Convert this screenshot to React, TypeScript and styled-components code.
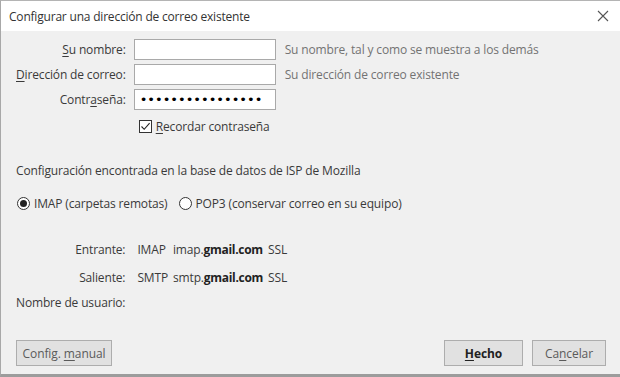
import React from "react";
import styled, { createGlobalStyle } from "styled-components";

const Global = createGlobalStyle`
  html, body { margin: 0; padding: 0; background: #f0f0f0; }
  body { font-family: "Open Sans", "Noto Sans", sans-serif; font-size: 12px; letter-spacing: -0.15px; color: #3a3a3a; }
  * { box-sizing: border-box; }
`;

const Window = styled.div`
  width: 620px;
  height: 377px;
  display: flex;
  flex-direction: column;
  border-top: 1px solid #b4b4b4;
  border-left: 1px solid #a8a8a8;
  border-bottom: 3px solid #9c9c9c;
  background: #f0f0f0;
  overflow: hidden;
`;

const TitleBar = styled.div`
  height: 30px;
  flex: none;
  background: #ffffff;
  display: flex;
  align-items: center;
  justify-content: space-between;
  padding: 0 8px 0 8px;
`;

const Title = styled.div`
  font-size: 12px;
  letter-spacing: -0.2px;
  color: #333;
`;

const Close = styled.div`
  width: 14px;
  height: 14px;
  margin-right: 2px;
  display: flex;
  align-items: center;
  justify-content: center;
`;

const Body = styled.div`
  flex: 1;
  display: flex;
  flex-direction: column;
  padding: 8px 14px 8px 15px;
`;

const FormGrid = styled.div`
  display: grid;
  grid-template-columns: auto 142px auto;
  justify-content: start;
  column-gap: 8px;
  row-gap: 4px;
  align-items: center;
`;

const Label = styled.label`
  text-align: right;
  color: #3a3a3a;
  white-space: nowrap;
  u { text-decoration: underline; text-underline-offset: 2px; }
`;

const Input = styled.div`
  height: 21px;
  background: #fff;
  border: 1px solid #a9a9a9;
  display: flex;
  align-items: center;
  padding-left: 5px;
  font-size: 13px;
  letter-spacing: 0;
  color: #000;
  font-family: "DejaVu Sans", sans-serif;
`;

const Hint = styled.span`
  color: #737373;
  padding-left: 1px;
  white-space: nowrap;
`;

const CheckRow = styled.div`
  grid-column: 2 / 4;
  display: flex;
  align-items: center;
  gap: 4px;
  padding-left: 5px;
  margin-top: 4px;
  u { text-underline-offset: 2px; }
`;

const Box = styled.span`
  width: 13px;
  height: 13px;
  border: 1px solid #333;
  background: #fff;
  display: flex;
  align-items: center;
  justify-content: center;
`;

const Section = styled.div`
  margin-top: 27px;
  color: #3a3a3a;
`;

const RadioRow = styled.div`
  display: flex;
  align-items: center;
  margin-top: 16px;
  gap: 10px;
`;

const RadioItem = styled.label`
  display: flex;
  align-items: center;
  gap: 4px;
`;

const Radio = styled.span<{ $on?: boolean }>`
  width: 13px;
  height: 13px;
  border-radius: 50%;
  border: 1px solid #333;
  background: #fff;
  display: flex;
  align-items: center;
  justify-content: center;
  margin-left: 1px;
  &::after {
    content: "";
    width: 7px;
    height: 7px;
    border-radius: 50%;
    background: ${(p) => (p.$on ? "#222" : "transparent")};
  }
`;

const ServerGrid = styled.div`
  display: grid;
  grid-template-columns: auto auto auto auto 1fr;
  grid-template-rows: 28px 25px auto;
  column-gap: 5px;
  margin-top: 29px;
  align-items: start;
`;

const SLabel = styled.span`
  text-align: right;
  margin-right: 7px;
  white-space: nowrap;
`;

const Val = styled.span`
  white-space: nowrap;
  b { font-weight: 700; color: #222; letter-spacing: -0.3px; }
`;

const Spacer = styled.div`
  flex: 1;
`;

const Footer = styled.div`
  display: flex;
  align-items: center;
  gap: 9px;
`;

const Button = styled.button<{ $w: number; $bold?: boolean }>`
  width: ${(p) => p.$w}px;
  height: 26px;
  background: #e1e1e1;
  border: 1px solid #adadad;
  font-family: inherit;
  font-size: 12px;
  letter-spacing: -0.1px;
  color: ${(p) => (p.$bold ? "#222" : "#5a5a5a")};
  font-weight: ${(p) => (p.$bold ? 700 : 400)};
  padding: 0;
  u { text-underline-offset: 2px; }
`;

export default function App() {
  return (
    <>
      <Global />
      <Window>
        <TitleBar>
          <Title>Configurar una dirección de correo existente</Title>
          <Close>
            <svg width="12" height="12" viewBox="0 0 12 12">
              <path d="M1 1 L11 11 M11 1 L1 11" stroke="#555" strokeWidth="1.1" />
            </svg>
          </Close>
        </TitleBar>
        <Body>
          <FormGrid>
            <Label><u>S</u>u nombre:</Label>
            <Input />
            <Hint>Su nombre, tal y como se muestra a los demás</Hint>
            <Label><u>D</u>irección de correo:</Label>
            <Input />
            <Hint>Su dirección de correo existente</Hint>
            <Label>Contr<u>a</u>seña:</Label>
            <Input>••••••••••••••••</Input>
            <span />
            <span />
            <CheckRow>
              <Box>
                <svg width="11" height="11" viewBox="0 0 11 11">
                  <path d="M1.5 5.5 L4.2 8.3 L9.6 2.2" fill="none" stroke="#222" strokeWidth="1.1" />
                </svg>
              </Box>
              <span><u>R</u>ecordar contraseña</span>
            </CheckRow>
          </FormGrid>
          <Section>Configuración encontrada en la base de datos de ISP de Mozilla</Section>
          <RadioRow>
            <RadioItem><Radio $on />IMAP (carpetas remotas)</RadioItem>
            <RadioItem><Radio />POP3 (conservar correo en su equipo)</RadioItem>
          </RadioRow>
          <ServerGrid>
            <SLabel>Entrante:</SLabel>
            <Val>IMAP</Val>
            <Val>imap.<b>gmail.com</b></Val>
            <Val>SSL</Val>
            <span />
            <SLabel>Saliente:</SLabel>
            <Val>SMTP</Val>
            <Val>smtp.<b>gmail.com</b></Val>
            <Val>SSL</Val>
            <span />
            <SLabel>Nombre de usuario:</SLabel>
          </ServerGrid>
          <Spacer />
          <Footer>
            <Button $w={96}>Config. <u>m</u>anual</Button>
            <Spacer />
            <Button $w={79} $bold><u>H</u>echo</Button>
            <Button $w={74}>Ca<u>n</u>celar</Button>
          </Footer>
        </Body>
      </Window>
    </>
  );
}
